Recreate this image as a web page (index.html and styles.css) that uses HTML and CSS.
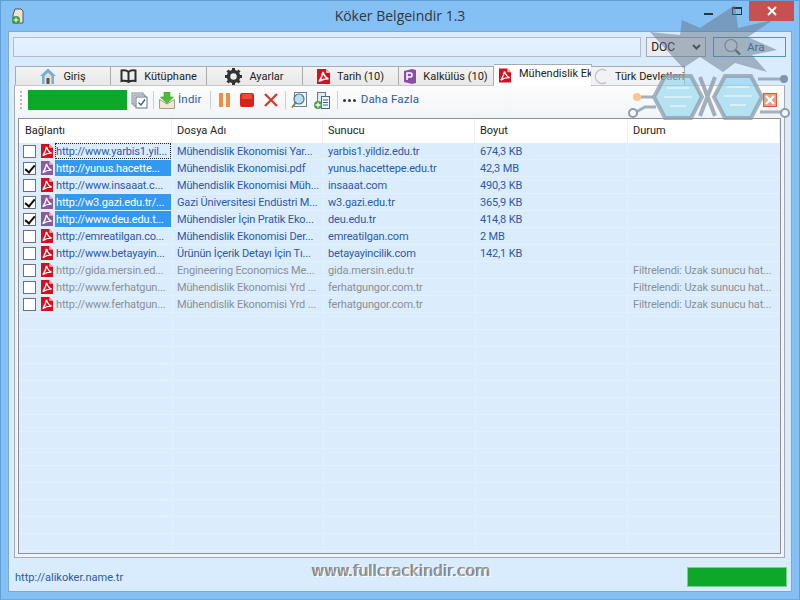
FILE: index.html
```html
<!DOCTYPE html>
<html lang="tr">
<head>
<meta charset="utf-8">
<title>Köker Belgeindir 1.3</title>
<link rel="stylesheet" href="styles.css">
</head>
<body>
<svg class="defs" width="0" height="0">
  <defs>
    <symbol id="pdf" viewBox="0 0 13 15">
      <path d="M0 0H9L13 4V15H0Z" fill="currentColor"/>
      <path d="M9 0V4H13Z" fill="#f3b6b6"/>
      <path d="M6 3C5.400 6 4.600 9 2 12.500 5 10.400 8 9.600 11.500 9.800 8.600 8.800 7 6.400 6 3Z" fill="none" stroke="#fff" stroke-width="1.500"/>
    </symbol>
  </defs>
</svg>
<div class="window">
  <header class="titlebar">
    <svg class="appicon" width="16" height="18" viewBox="0 0 16 18"><path d="M3 8L5 2H11L13 4V16H3Z" fill="#e8e4d6" stroke="#555"/><circle cx="6" cy="13" r="4" fill="#3d9a3d"/><path d="M6 10.500V15.500M3.500 13H8.500" stroke="#fff"/></svg>
    <h1 class="title">Köker Belgeindir 1.3</h1>
    <div class="controls">
      <span class="ctl-min"></span>
      <span class="ctl-max"></span>
      <span class="ctl-close"><svg width="10" height="10" viewBox="0 0 10 10"><path d="M1 1L9 9M9 1L1 9" stroke="#fff" stroke-width="2"/></svg></span>
    </div>
  </header>
  <div class="client">
    <div class="searchrow">
      <input class="query" type="text" aria-label="Arama">
      <div class="select">DOC<svg width="9" height="6" viewBox="0 0 9 6"><path d="M1 1L4.500 4.500 8 1" fill="none" stroke="#333" stroke-width="2"/></svg></div>
      <div class="searchbtn"><svg width="22" height="18" viewBox="0 0 22 18"><circle cx="8" cy="7.500" r="6" fill="#e6eef5" stroke="#8a97a3" stroke-width="1.200"/><path d="M12.500 12L17 16.500" stroke="#555" stroke-width="2"/></svg><span>Ara</span></div>
    </div>
    <nav class="tabs">
      <div class="tab"><svg width="16" height="16" viewBox="0 0 16 16"><path d="M8 .5L16 8 14 8V16H2V8H0Z" fill="#6fb1dc"/><path d="M4.500 8L8 4.500 11.500 8V16H4.500Z" fill="#e9ddc7"/><rect x="6.500" y="10" width="3" height="6" fill="#555"/></svg>Giriş</div>
      <div class="tab"><svg width="17" height="14" viewBox="0 0 17 14"><path d="M8.500 3C7 1.500 4 1 1.500 1.500V12C4 11.500 7 12 8.500 13 10 12 13 11.500 15.500 12V1.500C13 1 10 1.500 8.500 3ZM8.500 3V13" fill="none" stroke="#2e2e2e" stroke-width="2"/></svg>Kütüphane</div>
      <div class="tab"><svg width="17" height="17" viewBox="0 0 17 17"><circle cx="8.500" cy="8.500" r="5" fill="none" stroke="#333" stroke-width="3.500"/><path d="M8.500 0V3M8.500 14V17M0 8.500H3M14 8.500H17M2.500 2.500L4.500 4.500M12.500 12.500L14.500 14.500M14.500 2.500L12.500 4.500M4.500 12.500L2.500 14.500" stroke="#333" stroke-width="3"/></svg>Ayarlar</div>
      <div class="tab"><svg class="pdf-red" width="13" height="15"><use href="#pdf"/></svg>Tarih (10)</div>
      <div class="tab tab-kal"><svg width="12" height="15" viewBox="0 0 12 15"><path d="M0 2L8 0 12 1V14L8 15 0 13Z" fill="#8a4ea8"/><path d="M3 11V4H6.500C8.500 4 8.500 8 6.500 8H3" fill="none" stroke="#fff" stroke-width="1.500"/></svg>Kalkülüs (10)</div>
      <div class="tab tab-active"><svg class="pdf-red" width="12" height="15"><use href="#pdf"/></svg><span>Mühendislik Ekonomisi</span></div>
      <div class="tab tab-last"><svg class="spinner" width="17" height="17" viewBox="0 0 17 17"><path d="M13 2.500A7 7 0 1 0 13 14.500" fill="none" stroke="#c4c4c4" stroke-width="1.500"/></svg>Türk Devletleri</div>
    </nav>
    <section class="panel">
      <div class="toolbar">
        <span class="grip"></span>
        <span class="greenbar"></span>
        <svg class="t-tasks" width="17" height="17" viewBox="0 0 17 17"><rect x="1" y="1" width="11" height="11" fill="#eef2f6" stroke="#7d8a99"/><rect x="3" y="3" width="11" height="11" fill="#eef2f6" stroke="#7d8a99"/><rect x="5" y="5" width="11" height="11" fill="#fff" stroke="#66727f"/><path d="M7.500 10.500L10 13 14 7.500" fill="none" stroke="#3c5a7a" stroke-width="1.300"/></svg>
        <span class="sep s-a"></span>
        <span class="t-item"><svg width="16" height="17" viewBox="0 0 16 17"><path d="M.5 7.500L8 12 15.500 7.500V16.500H.5Z" fill="#f0e8d4" stroke="#a89e86"/><path d="M5 0H11V5H14.500L8 11.500 1.500 5H5Z" fill="#4ebc38" stroke="#3d9a2b" stroke-width=".6"/></svg><span>İndir</span></span>
        <span class="sep s-b"></span>
        <svg class="t-pause" width="11" height="14" viewBox="0 0 11 14"><rect width="4" height="14" fill="#ef8f45"/><rect x="7" width="4" height="14" fill="#ef8f45"/></svg>
        <svg class="t-stop" width="14" height="14" viewBox="0 0 14 14"><rect width="14" height="14" rx="2" fill="#d8231a"/><rect x="2" y="1" width="10" height="5" fill="#f0483a"/></svg>
        <svg class="t-x" width="14" height="14" viewBox="0 0 14 14"><path d="M1 1L13 13M13 1L1 13" stroke="#d03a30" stroke-width="2.300"/></svg>
        <span class="sep s-c"></span>
        <svg class="t-find" width="16" height="17" viewBox="0 0 16 17"><rect x="3.500" y=".5" width="12" height="14" fill="#f0f6fa" stroke="#6b8296"/><circle cx="8" cy="7" r="5" fill="#bcdff0" stroke="#52748f" stroke-width="1.200"/><path d="M4.500 11L1 15.500" stroke="#8c8060" stroke-width="2"/></svg>
        <svg class="t-add" width="16" height="17" viewBox="0 0 16 17"><rect x="3.500" y=".5" width="8" height="10" fill="#dfeaf2" stroke="#5d7b92"/><rect x="7.500" y="4.500" width="8" height="12" fill="#f3f8fb" stroke="#3f6d8f"/><path d="M9 8H14M9 10.500H14M9 13H14" stroke="#3f6d8f"/><circle cx="4" cy="13" r="4" fill="#47a447"/><path d="M4 10.500V15.500M1.500 13H6.500" stroke="#fff" stroke-width="1.300"/></svg>
        <span class="sep s-d"></span>
        <span class="t-more"><i></i><i></i><i></i><span>Daha Fazla</span></span>
        <svg class="t-close" width="14" height="14" viewBox="0 0 14 14"><rect width="14" height="14" fill="#de5a30"/><rect x="1" y="1" width="12" height="12" fill="#e8a08c"/><path d="M3 3L11 11M11 3L3 11" stroke="#fff" stroke-width="2.200"/></svg>
      </div>
      <div class="list">
        <div class="row head">
          <span>Bağlantı</span><span>Dosya Adı</span><span>Sunucu</span><span>Boyut</span><span>Durum</span>
        </div>
        <div class="row">
          <span class="link"><input class="check" type="checkbox" aria-label="Seç"><svg class="pdf-red" width="12" height="14"><use href="#pdf"/></svg><b class="url focus">http://www.yarbis1.yil...</b></span>
          <span>Mühendislik Ekonomisi Yar...</span><span>yarbis1.yildiz.edu.tr</span><span>674,3 KB</span><span></span>
        </div>
        <div class="row selected">
          <span class="link"><input class="check" type="checkbox" checked aria-label="Seç"><svg class="pdf-sel" width="12" height="14"><use href="#pdf"/></svg><b class="url">http://yunus.hacette...</b></span>
          <span>Mühendislik Ekonomisi.pdf</span><span>yunus.hacettepe.edu.tr</span><span>42,3 MB</span><span></span>
        </div>
        <div class="row">
          <span class="link"><input class="check" type="checkbox" aria-label="Seç"><svg class="pdf-red" width="12" height="14"><use href="#pdf"/></svg><b class="url">http://www.insaaat.c...</b></span>
          <span>Mühendislik Ekonomisi Müh...</span><span>insaaat.com</span><span>490,3 KB</span><span></span>
        </div>
        <div class="row selected">
          <span class="link"><input class="check" type="checkbox" checked aria-label="Seç"><svg class="pdf-sel" width="12" height="14"><use href="#pdf"/></svg><b class="url">http://w3.gazi.edu.tr/...</b></span>
          <span>Gazi Üniversitesi Endüstri M...</span><span>w3.gazi.edu.tr</span><span>365,9 KB</span><span></span>
        </div>
        <div class="row selected">
          <span class="link"><input class="check" type="checkbox" checked aria-label="Seç"><svg class="pdf-sel" width="12" height="14"><use href="#pdf"/></svg><b class="url">http://www.deu.edu.t...</b></span>
          <span>Mühendisler İçin Pratik Eko...</span><span>deu.edu.tr</span><span>414,8 KB</span><span></span>
        </div>
        <div class="row">
          <span class="link"><input class="check" type="checkbox" aria-label="Seç"><svg class="pdf-red" width="12" height="14"><use href="#pdf"/></svg><b class="url">http://emreatilgan.co...</b></span>
          <span>Mühendislik Ekonomisi Der...</span><span>emreatilgan.com</span><span>2 MB</span><span></span>
        </div>
        <div class="row">
          <span class="link"><input class="check" type="checkbox" aria-label="Seç"><svg class="pdf-red" width="12" height="14"><use href="#pdf"/></svg><b class="url">http://www.betayayin...</b></span>
          <span>Ürünün İçerik Detayı İçin Tı...</span><span>betayayincilik.com</span><span>142,1 KB</span><span></span>
        </div>
        <div class="row muted">
          <span class="link"><input class="check" type="checkbox" aria-label="Seç"><svg class="pdf-red" width="12" height="14"><use href="#pdf"/></svg><b class="url">http://gida.mersin.ed...</b></span>
          <span>Engineering Economics Me...</span><span>gida.mersin.edu.tr</span><span></span><span>Filtrelendi: Uzak sunucu hat...</span>
        </div>
        <div class="row muted">
          <span class="link"><input class="check" type="checkbox" aria-label="Seç"><svg class="pdf-red" width="12" height="14"><use href="#pdf"/></svg><b class="url">http://www.ferhatgun...</b></span>
          <span>Mühendislik Ekonomisi Yrd ...</span><span>ferhatgungor.com.tr</span><span></span><span>Filtrelendi: Uzak sunucu hat...</span>
        </div>
        <div class="row muted">
          <span class="link"><input class="check" type="checkbox" aria-label="Seç"><svg class="pdf-red" width="12" height="14"><use href="#pdf"/></svg><b class="url">http://www.ferhatgun...</b></span>
          <span>Mühendislik Ekonomisi Yrd ...</span><span>ferhatgungor.com.tr</span><span></span><span>Filtrelendi: Uzak sunucu hat...</span>
        </div>
      </div>
    </section>
    <footer class="status">
      <span class="homepage">http://alikoker.name.tr</span>
      <span class="statusbar"></span>
    </footer>
  </div>
</div>
<svg class="mascot" width="180" height="125" viewBox="620 0 180 125">
  <path class="hair" d="M650 32L680 35 682 20 700 28 735 5 738 28 773 20 748 37 777 50 752 55 767 72 735 63 723 72 700 57 683 68Z"/>
  <path class="wire" d="M641 97H653M636 112L645 107H656M758 79H780M760 112L781 112"/>
  <path class="cross" d="M700 77L715 116M715 77L700 116"/>
  <path class="lens" d="M665 76H691L702 97 691 118H665L654 97Z"/>
  <path class="lens" d="M725 76H751L762 97 751 118H725L714 97Z"/>
  <path class="glint" d="M667 88H689M664 97H692M670 106H686M727 87H749M724 96H752M730 105H746"/>
  <circle class="dot-orange" cx="637" cy="97" r="4"/>
  <circle class="ring" cx="633" cy="113" r="4"/>
  <circle class="dot-grey" cx="784" cy="79" r="4"/>
  <circle class="ring" cx="785" cy="113" r="4"/>
</svg>
<div class="watermark">www.fullcrackindir.com</div>
</body>
</html>
```
FILE: styles.css
```css
* { box-sizing: border-box; }
html, body { margin: 0; padding: 0; }
body { width: 800px; height: 600px; overflow: hidden; position: relative; font-family: Roboto, "Open Sans", sans-serif; font-size: 11px; color: #333; background: #85c0f5; }
.defs { position: absolute; }
.window { width: 800px; height: 600px; display: flex; flex-direction: column; padding: 0 7px 7px; background: #85c0f5; border: 1px solid #5f9fd6; border-bottom-color: #6fa9de; }
.titlebar { height: 30px; flex: none; display: flex; align-items: center; position: relative; }
.appicon { margin: 0 0 0 2px; }
.title { position: absolute; left: 0; right: 0; top: 6px; margin: 0; text-align: center; font-family: "Open Sans", sans-serif; font-size: 14px; line-height: 18px; font-weight: 400; color: #30373d; }
.controls { margin-left: auto; display: flex; align-self: flex-start; align-items: flex-start; margin-right: -2px; }
.ctl-min { width: 9px; height: 2px; background: #26323d; margin: 12px 19px 0 0; }
.ctl-max { width: 10px; height: 8px; border: 1px solid #26323d; border-top-width: 2px; margin: 6px 7px 0 0; }
.ctl-close { width: 45px; height: 20px; background: #c75050; display: flex; align-items: center; justify-content: center; }
.client { flex: 1; min-height: 0; display: flex; flex-direction: column; background: #d9ecfd; border: 1px solid #7fa9cc; padding: 5px 5px 0 4px; }
.searchrow { display: flex; align-items: stretch; height: 20px; flex: none; }
.query { width: 629px; height: 20px; margin: 0; background: linear-gradient(#e6f3fe, #dcedfd); border: 1px solid #b4bcc4; }
.select { width: 60px; margin-left: 5px; display: flex; align-items: center; justify-content: space-between; padding: 0 4px; font-size: 12px; color: #222; background: #eaeef2; border: 1px solid #a5a9ad; }
.searchbtn { width: 73px; margin-left: 7px; display: flex; align-items: center; gap: 2px; padding-left: 9px; color: #2b63b0; font-size: 11.500px; border: 1px solid #4f97b8; background: #dbecfb; }
.tabs { height: 21px; margin: 7px 0 0 2px; display: flex; align-items: flex-end; flex: none; position: relative; z-index: 1; }
.tab { width: 96px; height: 19px; display: flex; align-items: center; justify-content: center; gap: 7px; background: linear-gradient(#f3f3f3, #e8e8e8); border: 1px solid #a8abae; border-left: 0; border-bottom: 0; color: #222; white-space: nowrap; }
.tab:first-child { border-left: 1px solid #a8abae; }
.tab-kal { width: 95px; }
.tab-active { width: 98px; height: 22px; background: #fff; justify-content: flex-start; padding-left: 5px; gap: 8px; overflow: hidden; margin-bottom: -1px; }
.tab-active span { margin-top: -4px; }
.tab-active svg { flex: none; }
.tab-last { width: 94px; gap: 5px; justify-content: flex-start; padding-left: 2px; margin-left: -1px; background: rgba(243,243,243,.9); }
.spinner { flex: none; }
.pdf-red { color: #d5101e; flex: none; }
.pdf-sel { color: #8a5a9c; flex: none; }
.panel { flex: 1; min-height: 0; margin-left: 1px; width: 771px; display: flex; flex-direction: column; border: 1px solid #a8abae; border-top-color: #c4c8cc; padding: 0 3px 3px; background: #eef4fa; }
.toolbar { height: 28px; flex: none; display: flex; align-items: center; margin: 0 -3px; padding-left: 5px; background: linear-gradient(#fcfcfc, #f3f5f7); position: relative; }
.grip { width: 2px; height: 18px; background: repeating-linear-gradient(#d8a8b8 0 2px, transparent 2px 4px); }
.greenbar { width: 99px; height: 20px; margin-left: 6px; background: #0ba829; }
.t-tasks { margin-left: 4px; }
.sep { width: 1px; height: 18px; background: #c9cfd5; }
.s-a { margin-left: 5px; }
.t-item { margin-left: 5px; display: flex; align-items: center; gap: 3px; color: #2c5aa5; font-size: 11.500px; letter-spacing: .2px; }
.t-item span, .t-more span { margin-top: -2px; }
.s-b { margin-left: 8px; }
.t-pause { margin-left: 8px; }
.t-stop { margin-left: 10px; }
.t-x { margin-left: 10px; }
.s-c { margin-left: 7px; }
.t-find { margin-left: 5px; }
.t-add { margin-left: 7px; }
.s-d { margin-left: 7px; }
.t-more { margin-left: 5px; display: flex; align-items: center; gap: 2px; color: #2c5aa5; font-size: 11.500px; letter-spacing: .2px; }
.t-more i { width: 3px; height: 3px; background: #333; border-radius: 50%; }
.t-more span { margin-left: 3px; }
.t-close { margin-left: auto; margin-right: 7px; position: relative; z-index: 3; }
.list { flex: 1; min-height: 0; margin-top: 4px; border: 1px solid #8d9196; background-color: #dbedfd; background-image: linear-gradient(90deg, transparent 153px, #e2f1fe 153px 154px, transparent 154px 304px, #e2f1fe 304px 305px, transparent 305px 456px, #e2f1fe 456px 457px, transparent 457px 608px, #e2f1fe 608px 609px, transparent 609px), repeating-linear-gradient(#dbedfd 0 16px, #e3f1fe 16px 17px); background-position: 0 24px; background-repeat: no-repeat, repeat; overflow: hidden; }
.row { height: 17px; display: grid; grid-template-columns: 153px 151px 152px 153px 1fr; align-items: center; color: #2e58a8; border-bottom: 1px solid #e3f1fe; white-space: nowrap; letter-spacing: -.15px; }
.row > span { padding-left: 5px; overflow: hidden; height: 16px; line-height: 17px; }
.row > .link { padding-left: 0; display: flex; align-items: center; overflow: visible; }
.head { height: 24px; color: #222; background: #fff; border-bottom: 0; letter-spacing: 0; }
.row.head > span { padding-left: 5px; height: 24px; line-height: 24px; border-right: 1px solid #f0f0f0; }
.row.head > span:first-child { padding-left: 6px; }
.check { appearance: none; width: 13px; height: 13px; margin: 0 5px 0 4px; background: #fff; border: 1px solid #6d7278; flex: none; position: relative; }
.check:checked::after { content: ""; position: absolute; left: 3px; top: 0; width: 4px; height: 8px; border: solid #111; border-width: 0 2px 2px 0; transform: rotate(40deg); }
.url { font-weight: 400; height: 16px; line-height: 17px; flex: 1; margin: 0 1px 0 2px; padding-left: 1px; color: #2e58a8; }
.focus { outline: 1px dotted #222; outline-offset: -1px; }
.selected .url { background: #3399f0; color: #fff; }
.muted, .muted .url { color: #8b8f94; }
.status { height: 33px; flex: none; display: flex; align-items: center; justify-content: space-between; padding: 5px 0 0 2px; margin-right: -1px; }
.homepage { color: #2c5aa5; font-size: 11px; }
.statusbar { width: 100px; height: 20px; background: #0ba829; border: 1px solid #7ad08f; }
.mascot { position: absolute; left: 620px; top: 0; pointer-events: none; z-index: 2; }
.hair { fill: #65768a; opacity: .5; }
.wire { fill: none; stroke: #8c9db0; stroke-width: 3; opacity: .8; }
.cross { stroke: #8c9db0; stroke-width: 4; opacity: .8; }
.lens { fill: #8ad4ec; fill-opacity: .6; stroke: #8f9cab; stroke-width: 4; stroke-opacity: .75; }
.glint { stroke: #eef9fc; stroke-width: 1.500; opacity: .8; }
.dot-orange { fill: #f8c78c; }
.dot-grey { fill: #8194a9; }
.ring { fill: #f4f8fb; stroke: #8c9db0; stroke-width: 2; }
.watermark { position: absolute; left: 312px; top: 561px; font-family: "DejaVu Sans", sans-serif; font-size: 15.500px; line-height: 20px; color: #9a9a9a; text-shadow: 1px 1px 0 #fff, -1px 0 0 #777; z-index: 2; }
```
